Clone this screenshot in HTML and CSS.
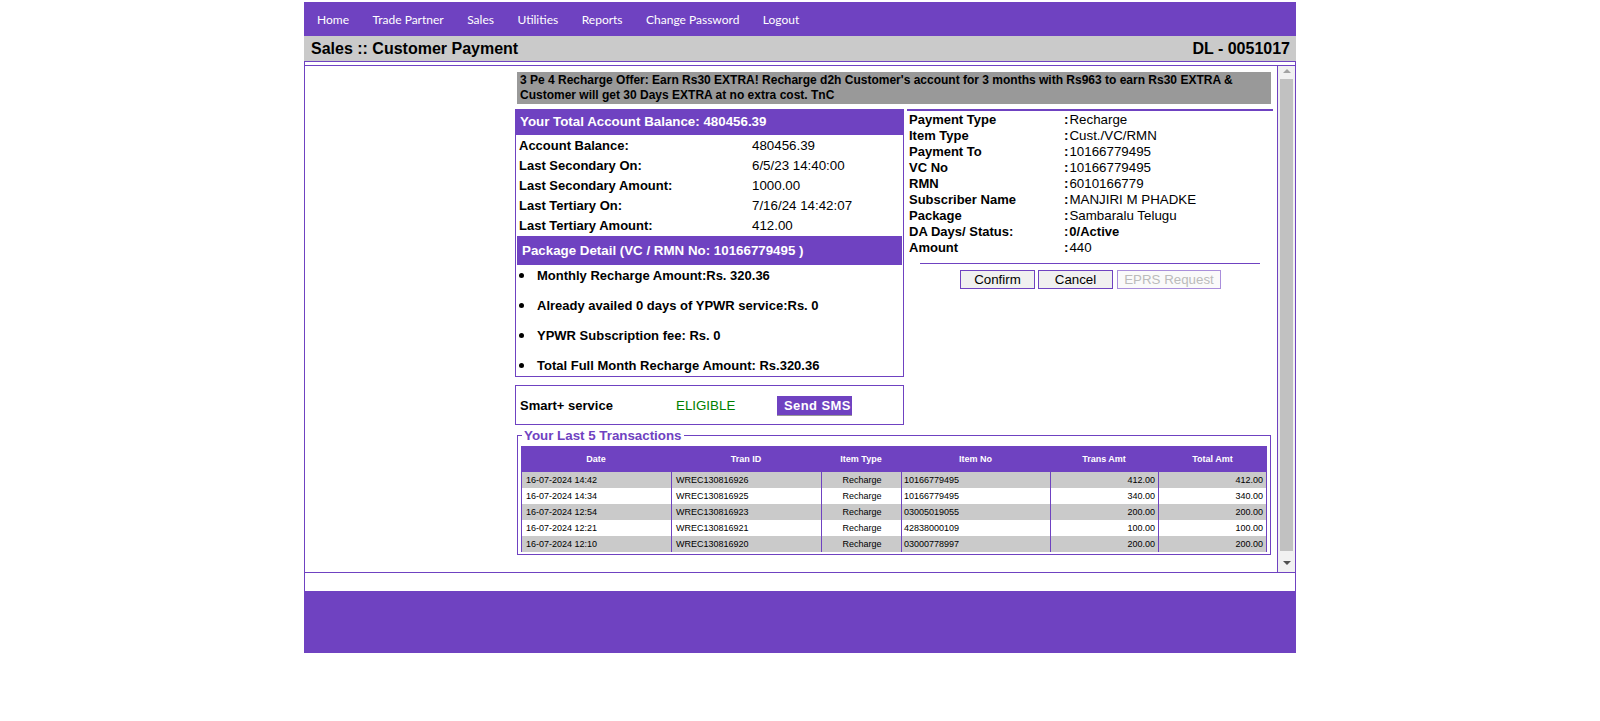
FILE: index.html
```html
<!DOCTYPE html>
<html lang="en">
<head>
<meta charset="utf-8">
<title>Sales :: Customer Payment</title>
<link rel="stylesheet" href="styles.css">
</head>
<body>
<div class="page">
  <nav class="nav">
    <a>Home</a><a>Trade Partner</a><a>Sales</a><a>Utilities</a><a>Reports</a><a>Change Password</a><a>Logout</a>
  </nav>
  <header class="titlebar"><span>Sales :: Customer Payment</span><span>DL - 0051017</span></header>
  <div class="shell">
    <div class="frame">
      <main class="view">
        <div class="offer">3 Pe 4 Recharge Offer: Earn Rs30 EXTRA! Recharge d2h Customer's account for 3 months with Rs963 to earn Rs30 EXTRA &amp; Customer will get 30 Days EXTRA at no extra cost. TnC</div>
        <div class="columns">
          <div class="left">
            <section class="box balance">
              <h2 class="balance-head">Your Total Account Balance: 480456.39</h2>
              <dl class="stats">
                <dt>Account Balance:</dt><dd>480456.39</dd>
                <dt>Last Secondary On:</dt><dd>6/5/23 14:40:00</dd>
                <dt>Last Secondary Amount:</dt><dd>1000.00</dd>
                <dt>Last Tertiary On:</dt><dd>7/16/24 14:42:07</dd>
                <dt>Last Tertiary Amount:</dt><dd>412.00</dd>
              </dl>
              <h3 class="package-head">Package Detail (VC / RMN No: 10166779495 )</h3>
              <ul class="package">
                <li>Monthly Recharge Amount:Rs. 320.36</li>
                <li>Already availed 0 days of YPWR service:Rs. 0</li>
                <li>YPWR Subscription fee: Rs. 0</li>
                <li>Total Full Month Recharge Amount: Rs.320.36</li>
              </ul>
            </section>
            <section class="box smart">
              <b class="smart-label">Smart+ service</b>
              <span class="eligible">ELIGIBLE</span>
              <button class="sms" type="button">Send SMS</button>
            </section>
          </div>
          <div class="right">
            <dl class="details">
              <dt>Payment Type</dt><dd>Recharge</dd>
              <dt>Item Type</dt><dd>Cust./VC/RMN</dd>
              <dt>Payment To</dt><dd>10166779495</dd>
              <dt>VC No</dt><dd>10166779495</dd>
              <dt>RMN</dt><dd>6010166779</dd>
              <dt>Subscriber Name</dt><dd>MANJIRI M PHADKE</dd>
              <dt>Package</dt><dd>Sambaralu Telugu</dd>
              <dt>DA Days/ Status:</dt><dd class="strong">0/Active</dd>
              <dt>Amount</dt><dd>440</dd>
            </dl>
            <hr class="rule">
            <div class="actions">
              <button class="btn btn-confirm" type="button">Confirm</button>
              <button class="btn btn-cancel" type="button">Cancel</button>
              <button class="btn btn-eprs" type="button" disabled>EPRS Request</button>
            </div>
          </div>
        </div>
        <fieldset class="history">
          <legend>Your Last 5 Transactions</legend>
          <table class="tx">
            <colgroup><col class="c1"><col class="c2"><col class="c3"><col class="c4"><col class="c5"><col class="c6"></colgroup>
            <thead>
              <tr><th>Date</th><th>Tran ID</th><th>Item Type</th><th>Item No</th><th>Trans Amt</th><th>Total Amt</th></tr>
            </thead>
            <tbody>
              <tr><td>16-07-2024 14:42</td><td>WREC130816926</td><td class="mid">Recharge</td><td class="item">10166779495</td><td class="num">412.00</td><td class="num">412.00</td></tr>
              <tr><td>16-07-2024 14:34</td><td>WREC130816925</td><td class="mid">Recharge</td><td class="item">10166779495</td><td class="num">340.00</td><td class="num">340.00</td></tr>
              <tr><td>16-07-2024 12:54</td><td>WREC130816923</td><td class="mid">Recharge</td><td class="item">03005019055</td><td class="num">200.00</td><td class="num">200.00</td></tr>
              <tr><td>16-07-2024 12:21</td><td>WREC130816921</td><td class="mid">Recharge</td><td class="item">42838000109</td><td class="num">100.00</td><td class="num">100.00</td></tr>
              <tr><td>16-07-2024 12:10</td><td>WREC130816920</td><td class="mid">Recharge</td><td class="item">03000778997</td><td class="num">200.00</td><td class="num">200.00</td></tr>
            </tbody>
          </table>
        </fieldset>
      </main>
      <div class="scrollbar" aria-hidden="true">
        <div class="arrow arrow-up"></div>
        <div class="thumb"></div>
        <div class="arrow arrow-down"></div>
      </div>
    </div>
  </div>
  <footer class="footer"></footer>
</div>
</body>
</html>
```

FILE: styles.css
```css
* { box-sizing: border-box; }
html, body { margin: 0; padding: 0; background: #fff; }
body { font-family: "Liberation Sans", Arial, sans-serif; font-size: 13.33px; color: #000; }

.page { width: 992px; margin: 2px auto 0; }

.nav {
  height: 34px;
  background: #6f42c1;
  display: flex;
  align-items: center;
  gap: 23.5px;
  padding-left: 13px;
  font-family: Lato, sans-serif;
  font-size: 12px;
  color: #fff;
}

.titlebar {
  height: 26px;
  background: #cacaca;
  border-bottom: 1px solid #6f42c1;
  display: flex;
  justify-content: space-between;
  align-items: center;
  padding: 0 6px 0 7px;
  font-size: 16px;
  font-weight: bold;
}

.shell {
  height: 529px;
  border-left: 1px solid #6f42c1;
  border-right: 1px solid #6f42c1;
  padding-top: 3px;
}

.frame {
  height: 508px;
  border-top: 1px solid #6f42c1;
  border-bottom: 1px solid #6f42c1;
  display: flex;
}

.view {
  flex: 1;
  border-right: 1px solid #6f42c1;
  padding: 6px 0 0 210px;
}

.offer {
  width: 754px;
  margin-left: 2px;
  height: 32px;
  background: #999;
  padding: 1px 3px 0;
  font-size: 12px;
  font-weight: bold;
  line-height: 15px;
}

.columns { display: flex; gap: 3px; margin-top: 5px; }

.left { width: 389px; }
.right { width: 366px; }

.box { border: 1px solid #6f42c1; }

.balance { height: 268px; }

.balance-head {
  margin: -1px -1px 0;
  height: 26px;
  background: #6f42c1;
  color: #fff;
  font-size: 13.33px;
  line-height: 26px;
  padding-left: 5px;
}

.stats {
  margin: 0;
  display: grid;
  grid-template-columns: 233px 1fr;
  grid-auto-rows: 20px;
  line-height: 20px;
  padding: 1px 0 0 3px;
  height: 101px;
}
.stats dt { font-weight: bold; font-size: 13px; }
.stats dd { margin: 0; }

.package-head {
  margin: 0 1px;
  height: 29px;
  background: #6f42c1;
  color: #fff;
  font-size: 13.33px;
  line-height: 29px;
  padding-left: 5px;
}

.package {
  margin: 3px 0 0;
  padding: 0 0 0 3px;
  list-style: none;
  font-size: 13px;
  font-weight: bold;
  line-height: 15px;
}
.package li { display: flex; align-items: center; margin-bottom: 14.85px; }
.package li::before {
  content: "";
  width: 5px;
  height: 5px;
  margin-right: 13px;
  border-radius: 50%;
  background: #000;
}
.package li:last-child { margin-bottom: 0; }

.smart {
  margin-top: 8px;
  height: 40px;
  display: flex;
  align-items: center;
  padding-left: 4px;
}
.smart-label { width: 156px; font-size: 13px; }
.eligible { color: #008000; width: 101px; }
.sms {
  width: 75px;
  height: 20px;
  margin: 2px 0 0;
  padding: 0 0 0 7px;
  border: 0;
  border-bottom: 1px solid #999;
  background: #6f42c1;
  color: #fff;
  font-family: inherit;
  font-size: 13px;
  font-weight: bold;
  letter-spacing: 0.4px;
  text-align: left;
}

.details {
  margin: 0;
  border-top: 2px solid #6f42c1;
  padding: 1px 0 0 2px;
  display: grid;
  grid-template-columns: 155px 1fr;
  grid-auto-rows: 16px;
  line-height: 16px;
}
.details dt { font-weight: bold; font-size: 13px; }
.details dd { margin: 0; }
.details dd::before { content: ":"; font-weight: bold; margin-right: 1px; }
.details .strong { font-weight: bold; font-size: 13px; }

.rule {
  margin: 7px 13px 6px;
  border: 0;
  border-top: 1px solid #6f42c1;
  height: 0;
}

.actions { display: flex; gap: 3px; padding-left: 53px; }

.btn {
  height: 19px;
  padding: 0;
  border: 1px solid #6f42c1;
  background: #f0f0f0;
  color: #000;
  font-family: inherit;
  font-size: 13.33px;
}
.btn-confirm { width: 75px; }
.btn-cancel { width: 75px; }
.btn-eprs {
  width: 104px;
  margin-left: 1px;
  border-color: #a98edb;
  background: #fafafa;
  color: #bbb;
}

.history {
  width: 754px;
  height: 129px;
  margin: 1px 0 0 2px;
  padding: 0 3px 3px;
  border: 1px solid #6f42c1;
  min-width: 0;
}
.history legend {
  margin-left: 1px;
  padding: 2px 2px 0;
  color: #6f42c1;
  font-size: 13.33px;
  font-weight: bold;
  line-height: 16px;
}

.tx {
  width: 746px;
  table-layout: fixed;
  border-collapse: separate;
  border-spacing: 0;
  margin-top: 2px;
  font-size: 9px;
}
.c1, .c2 { width: 150px; }
.c3 { width: 80px; }
.c4 { width: 149px; }
.c5 { width: 108px; }
.c6 { width: 109px; }

.tx th {
  height: 26px;
  padding: 0;
  background: #6f42c1;
  color: #fff;
  font-weight: bold;
  text-align: center;
}
.tx td {
  height: 16px;
  padding: 0 3px 0 4px;
  border-left: 1px solid #6f42c1;
  line-height: 16px;
  white-space: nowrap;
}
.tx td:last-child { border-right: 1px solid #6f42c1; }
.tx tbody tr:nth-child(odd) td { background: #cacaca; }
.tx .mid { text-align: center; }
.tx .num { text-align: right; }
.tx .item { padding-left: 2px; }

.scrollbar {
  width: 17px;
  background: #f1f1f1;
  display: flex;
  flex-direction: column;
  align-items: center;
}
.arrow { width: 17px; height: 13px; flex: none; }
.arrow::after {
  content: "";
  display: block;
  width: 0;
  margin: 3px auto 0;
  border-left: 4px solid transparent;
  border-right: 4px solid transparent;
}
.arrow-up::after { border-bottom: 4px solid #a3a3a3; }
.arrow-down { height: 21px; }
.arrow-down::after { margin-top: 10px; border-top: 4px solid #505050; }
.thumb { width: 13px; flex: 1; background: #c1c1c1; }

.footer { height: 62px; background: #6f42c1; }
```
